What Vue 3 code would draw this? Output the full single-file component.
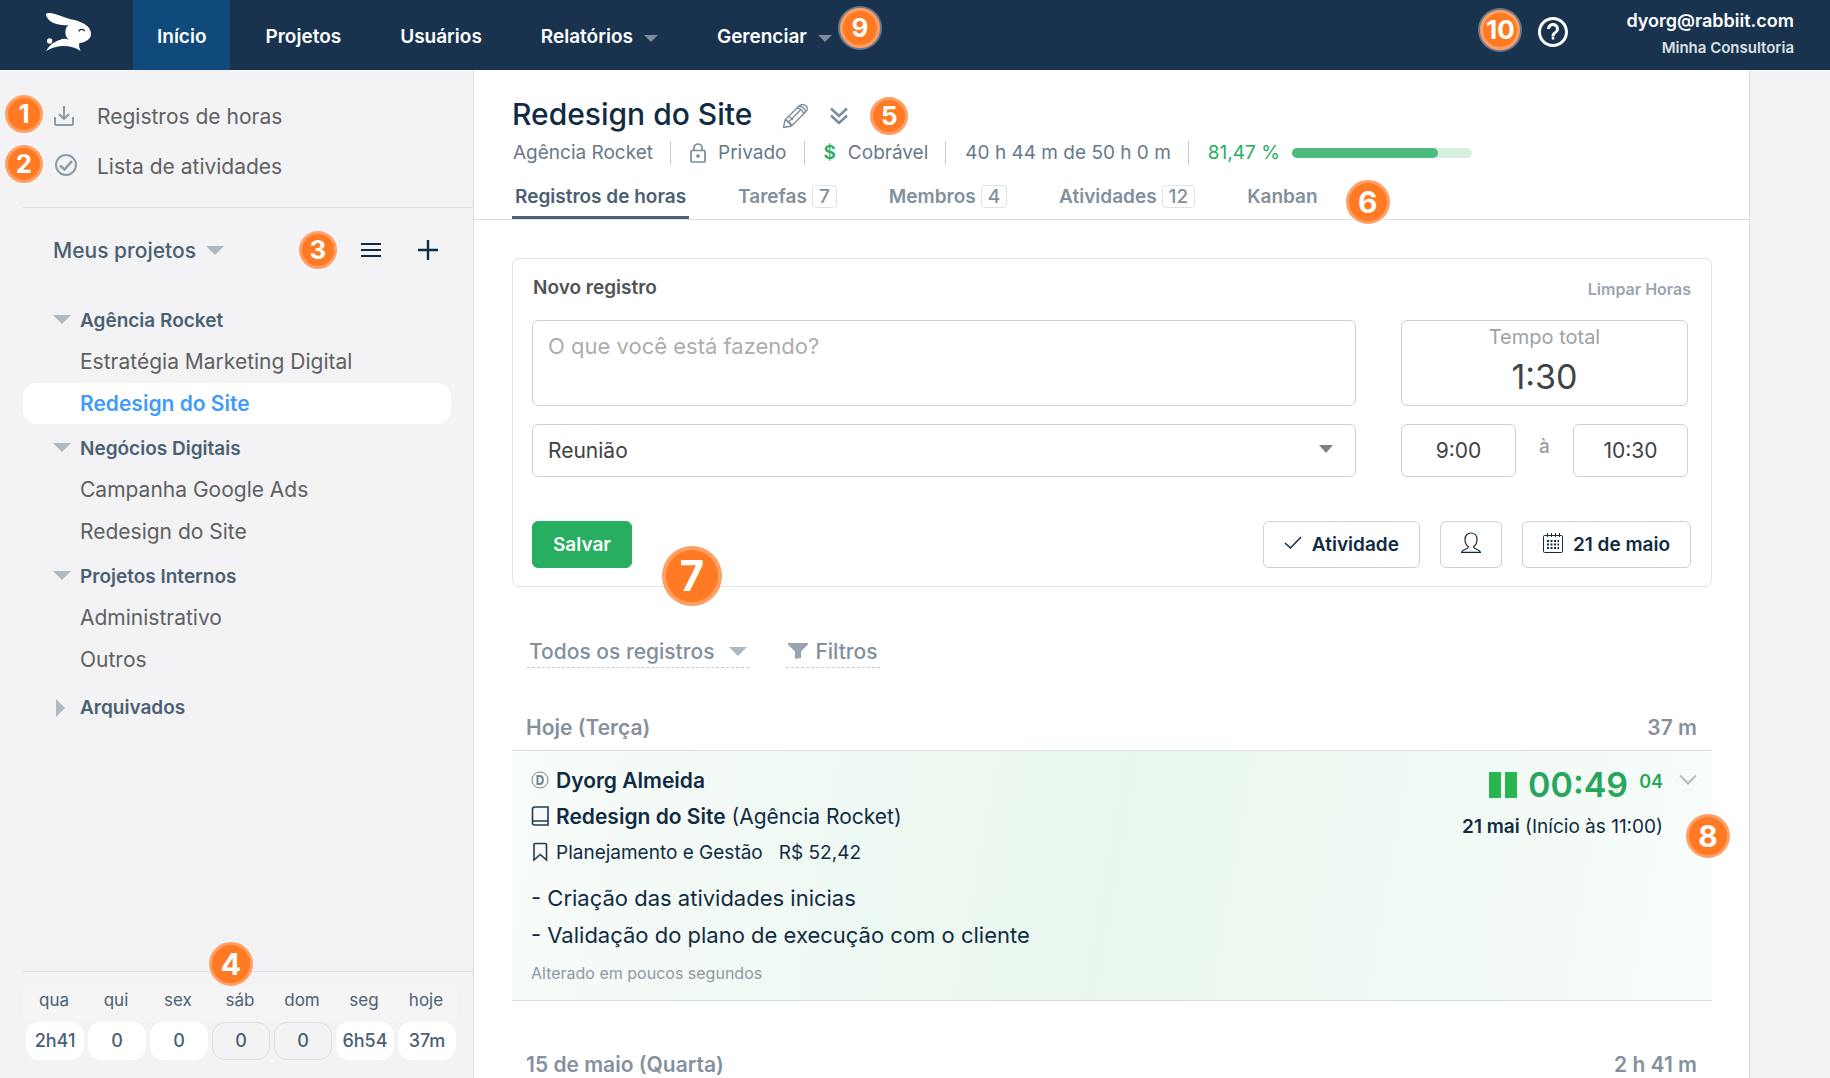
<script setup>
import { ref } from 'vue'

const menu = [
  { label: 'Início', active: true },
  { label: 'Projetos' },
  { label: 'Usuários' },
  { label: 'Relatórios', caret: true },
  { label: 'Gerenciar', caret: true, badge: 9 },
]

const groups = [
  {
    name: 'Agência Rocket',
    projects: [{ name: 'Estratégia Marketing Digital' }, { name: 'Redesign do Site', active: true }],
  },
  { name: 'Negócios Digitais', projects: [{ name: 'Campanha Google Ads' }, { name: 'Redesign do Site' }] },
  { name: 'Projetos Internos', projects: [{ name: 'Administrativo' }, { name: 'Outros' }] },
]

const days = [
  { name: 'qua', time: '2h41' },
  { name: 'qui', time: '0' },
  { name: 'sex', time: '0' },
  { name: 'sáb', time: '0', off: true },
  { name: 'dom', time: '0', off: true },
  { name: 'seg', time: '6h54' },
  { name: 'hoje', time: '37m' },
]

const tabs = [
  { label: 'Registros de horas', active: true },
  { label: 'Tarefas', count: 7 },
  { label: 'Membros', count: 4 },
  { label: 'Atividades', count: 12 },
  { label: 'Kanban', badge: 6 },
]

const progress = 81.47
const description = ref('')
const activity = ref('Reunião')
const total = ref('1:30')
const start = ref('9:00')
const end = ref('10:30')
</script>

<template>
  <div class="page">
    <header class="topbar">
      <a class="logo" href="#" aria-label="Rabbiit">
        <svg width="46" height="40" viewBox="0 0 138 120">
          <path fill="#fff" d="M3 8C2 3 8 2 17 3C34 6 52 14 74 21C104 27 138 38 138 66C138 82 121 91 103 94C101 101 103 109 107 117C78 99 40 96 3 117C14 98 30 88 44 84C54 79 62 79 72 83C60 76 56 52 70 39C42 42 9 32 3 8Z" />
          <circle cx="14" cy="87" r="8" fill="#fff" />
          <path d="M101 58C105 50 116 50 119 58" fill="none" stroke="#19334f" stroke-width="4" />
        </svg>
      </a>
      <nav class="menu">
        <a v-for="item in menu" :key="item.label" href="#" class="menu-item" :class="{ active: item.active }">
          {{ item.label }}
          <svg v-if="item.caret" class="menu-caret" width="14" height="7" viewBox="0 0 14 7"><path d="M0 0H14L7 7Z" fill="#7f8c9a" /></svg>
          <span v-if="item.badge" class="badge halo on-menu">{{ item.badge }}</span>
        </a>
      </nav>
      <div class="account">
        <span class="badge halo">10</span>
        <button class="icon-btn help" aria-label="Ajuda">
          <svg width="30" height="30" viewBox="0 0 24 24" fill="#fff"><path d="M11 18h2v-2h-2v2zm1-18C5.380 0 0 5.380 0 12s5.380 12 12 12 12-5.380 12-12S18.620 0 12 0zm0 21.600c-5.300 0-9.600-4.300-9.600-9.600S6.700 2.400 12 2.400s9.600 4.300 9.600 9.600-4.300 9.600-9.600 9.600zm0-16.800c-2.650 0-4.800 2.150-4.800 4.800h2.400c0-1.320 1.080-2.400 2.400-2.400s2.400 1.080 2.400 2.400c0 2.400-3.600 2.100-3.600 6h2.400c0-2.700 3.600-3 3.600-6 0-2.650-2.150-4.800-4.800-4.800z" /></svg>
        </button>
        <a href="#" class="user">
          <span class="user-mail">dyorg@rabbiit.com</span>
          <span class="user-org">Minha Consultoria</span>
        </a>
      </div>
    </header>

    <div class="body">
      <aside class="sidebar">
        <nav class="shortcuts">
          <a href="#" class="shortcut">
            <span class="badge on-shortcut">1</span>
            <svg width="24" height="24" viewBox="0 0 24 24" fill="none" stroke="#8a9aa8" stroke-width="2"><path d="M2 13v6.500a1.500 1.500 0 0 0 1.500 1.500h15a1.500 1.500 0 0 0 1.500-1.500V13M11 2v13M6 10l5 5 5-5" /></svg>
            Registros de horas
          </a>
          <a href="#" class="shortcut">
            <span class="badge on-shortcut">2</span>
            <svg width="24" height="24" viewBox="0 0 24 24" fill="none" stroke="#8a9aa8" stroke-width="2"><circle cx="13" cy="11" r="10" /><path d="M7 11.500l4.500 4L19 7" stroke-width="2.500" /></svg>
            Lista de atividades
          </a>
        </nav>

        <div class="projects-head">
          <button class="projects-title">
            Meus projetos
            <svg width="18" height="9" viewBox="0 0 18 9"><path d="M0 0H18L9 9Z" fill="#adb8c0" /></svg>
          </button>
          <span class="badge">3</span>
          <button class="icon-btn" aria-label="Listar projetos">
            <svg width="20" height="20" viewBox="0 0 20 20" stroke="#112b42" stroke-width="2"><path d="M0 4H20M0 10H20M0 16H20" /></svg>
          </button>
          <button class="icon-btn" aria-label="Novo projeto">
            <svg width="20" height="20" viewBox="0 0 20 20" stroke="#112b42" stroke-width="2.400"><path d="M0 10H20M10 0V20" /></svg>
          </button>
        </div>

        <ul class="tree">
          <li v-for="group in groups" :key="group.name">
            <button class="group">
              <svg width="18" height="18" viewBox="0 0 18 18"><path d="M0 3H18L9 12Z" fill="#adb8c0" /></svg>
              {{ group.name }}
            </button>
            <ul class="tree">
              <li v-for="project in group.projects" :key="project.name">
                <a href="#" class="project" :class="{ active: project.active }">{{ project.name }}</a>
              </li>
            </ul>
          </li>
          <li class="archived">
            <button class="group">
              <svg width="18" height="18" viewBox="0 0 18 18"><path d="M3 0V18L12 9Z" fill="#adb8c0" /></svg>
              Arquivados
            </button>
          </li>
        </ul>

        <div class="week">
          <span class="badge md on-week">4</span>
          <table>
            <thead>
              <tr><th v-for="day in days" :key="day.name" scope="col">{{ day.name }}</th></tr>
            </thead>
            <tbody>
              <tr>
                <td v-for="day in days" :key="day.name"><span class="day" :class="{ off: day.off }">{{ day.time }}</span></td>
              </tr>
            </tbody>
          </table>
        </div>
      </aside>

      <main class="content">
        <section class="project-head">
          <div class="title-row">
            <h1>Redesign do Site</h1>
            <button class="icon-btn" aria-label="Editar projeto">
              <svg width="26" height="26" viewBox="0 0 26 26" fill="none" stroke="#7b8d98" stroke-width="1.300" stroke-linejoin="round"><path d="M1.500 24.500L3 17L17 3C19 1 22 1 24 3S25.500 7 23.500 9L9.500 23ZM3 17C5 17 6 18 6.200 19.500C8 19.500 9.300 21 9.500 23M15 5C18 5 21.500 8.500 21.500 11M17 3C20 3 23.500 6.500 23.500 9M6.500 19L19 6.500M3.500 16.500L9.500 22.500M7 13L11 17" /></svg>
            </button>
            <button class="icon-btn" aria-label="Mais detalhes">
              <svg width="18" height="18" viewBox="0 0 18 18" fill="none" stroke="#7b8d98" stroke-width="2.500"><path d="M1 1.500L9 9L17 1.500M1 8.500L9 16L17 8.500" /></svg>
            </button>
            <span class="badge">5</span>
          </div>
          <div class="meta">
            <span>Agência Rocket</span>
            <span class="meta-icon lock">
              <svg width="16" height="20" viewBox="0 0 16 20" fill="none" stroke="#7b8d98" stroke-width="1.700"><rect x="1" y="7.500" width="14" height="11.500" rx="1" /><path d="M4 7.500V5a4 4 0 0 1 8 0V7.500" /><circle cx="8" cy="13" r="1" fill="#7b8d98" /></svg>
              Privado
            </span>
            <span class="meta-icon"><b class="money">$</b> Cobrável</span>
            <span>40 h 44 m de 50 h 0 m</span>
            <span class="percent">81,47 %</span>
            <div class="bar" role="progressbar" :aria-valuenow="progress"><div class="bar-fill" :style="{ width: progress + '%' }"></div></div>
          </div>
          <nav class="tabs">
            <a v-for="tab in tabs" :key="tab.label" href="#" class="tab" :class="{ active: tab.active }">
              {{ tab.label }}
              <span v-if="tab.count" class="count">{{ tab.count }}</span>
              <span v-if="tab.badge" class="badge md on-tab">{{ tab.badge }}</span>
            </a>
          </nav>
        </section>

        <div class="feed">
          <form class="card" @submit.prevent>
            <div class="card-head">
              <h2>Novo registro</h2>
              <button type="button" class="clear">Limpar Horas</button>
            </div>
            <div class="fields">
              <div class="fields-main">
                <textarea v-model="description" class="field" aria-label="Descrição" placeholder="O que você está fazendo?"></textarea>
                <div class="select">
                  <select v-model="activity" class="field" aria-label="Atividade"><option>Reunião</option></select>
                  <svg class="select-caret" width="14" height="8" viewBox="0 0 14 8"><path d="M0 0H14L7 8Z" fill="#808080" /></svg>
                </div>
              </div>
              <div class="fields-time">
                <label class="field total">
                  Tempo total
                  <input v-model="total" type="text" />
                </label>
                <div class="range">
                  <input v-model="start" class="field" type="text" aria-label="Início" />
                  <span>à</span>
                  <input v-model="end" class="field" type="text" aria-label="Fim" />
                </div>
              </div>
            </div>
            <div class="actions">
              <button class="btn save">Salvar</button>
              <span class="badge lg on-save">7</span>
              <button type="button" class="btn first-right">
                <svg width="18" height="18" viewBox="0 0 18 18" fill="none" stroke="#112b42" stroke-width="1.500"><path d="M1 9L6.500 14L17 3" /></svg>
                Atividade
              </button>
              <button type="button" class="btn" aria-label="Pessoa">
                <svg width="20" height="22" viewBox="0 0 20 22" fill="none" stroke="#112b42" stroke-width="1.200"><path d="M7.500 15C5 13 4 10.500 4 7.500C4 3.500 6.500 1 10 1S16 3.500 16 7.500C16 10.500 15 13 12.500 15C13 17.500 19 17 19.500 20.400H.500C1 17 7 17.500 7.500 15Z" /></svg>
              </button>
              <button type="button" class="btn">
                <svg width="20" height="22" viewBox="0 0 20 22" fill="none" stroke="#112b42"><rect x=".5" y="3.500" width="19" height="17" rx="1" /><path d="M4.500 1V5M8.500 1V5M12.500 1V5M16.500 1V5" /><path stroke-width="2" stroke-dasharray="2 1.500" d="M4 9H16M4 12.500H16M4 16H16" /></svg>
                21 de maio
              </button>
            </div>
          </form>

          <div class="filters">
            <button class="filter">
              Todos os registros
              <svg class="filter-caret" width="18" height="9" viewBox="0 0 18 9"><path d="M0 0H18L9 9Z" fill="#adb8c0" /></svg>
            </button>
            <button class="filter">
              <svg width="20" height="16" viewBox="0 0 20 16"><path d="M0 0H20V1.500L13 8.500V15L7 16V8.500L0 1.500Z" fill="#98a4b1" /></svg>
              Filtros
            </button>
          </div>

          <div class="day-head"><h3>Hoje (Terça)</h3><span>37 m</span></div>
          <article class="entry">
            <div class="entry-info">
              <p class="line">
                <svg width="18" height="18" viewBox="0 0 18 18" fill="none" stroke="#758492"><circle cx="9" cy="9" r="8" /><path d="M6.500 5V13H8.500C13 13 13 5 8.500 5Z" stroke-width="2" /></svg>
                <strong>Dyorg Almeida</strong>
              </p>
              <p class="line">
                <svg width="18" height="20" viewBox="0 0 18 20" fill="none" stroke="#233a50" stroke-width="1.600"><path d="M17 19H3.500A2 2 0 0 1 1.500 17V3A2 2 0 0 1 3.500 1H17ZM1.500 15H17" /></svg>
                <span><strong>Redesign do Site</strong> (Agência Rocket)</span>
              </p>
              <p class="line small">
                <svg width="18" height="20" viewBox="0 0 18 20" fill="none" stroke="#233a50" stroke-width="1.600"><path d="M3 18V3A1.500 1.500 0 0 1 4.500 1.500H14A1.500 1.500 0 0 1 15.500 3V18L9.200 12.500Z" /></svg>
                <span>Planejamento e Gestão</span>
                <span class="price">R$ 52,42</span>
              </p>
              <p class="note">- Criação das atividades inicias<br />- Validação do plano de execução com o cliente</p>
              <p class="changed">Alterado em poucos segundos</p>
            </div>
            <div class="entry-side">
              <div class="timer">
                <button class="icon-btn" aria-label="Pausar">
                  <svg width="28" height="26" viewBox="0 0 28 26" fill="#27b64f"><path d="M0 0H12V26H0ZM16 0H28V26H16Z" /></svg>
                </button>
                <span class="clock">00:49</span>
                <span class="seconds">04</span>
              </div>
              <p class="when"><strong>21 mai</strong> (Início às 11:00)</p>
            </div>
            <button class="icon-btn more" aria-label="Opções">
              <svg width="18" height="12" viewBox="0 0 18 12" fill="none" stroke="#b5babf" stroke-width="2"><path d="M1 1.500L9 9.500L17 1.500" /></svg>
            </button>
            <span class="badge md on-entry">8</span>
          </article>

          <div class="day-head later"><h3>15 de maio (Quarta)</h3><span>2 h 41 m</span></div>
        </div>
      </main>
      <div class="gutter"></div>
    </div>
  </div>
</template>

<style>
body {
  margin: 0;
  background: #f3f3f5;
}
</style>

<style scoped>
.page {
  display: flex;
  flex-direction: column;
  height: 100vh;
  overflow: hidden;
  font-family: Inter, "Liberation Sans", sans-serif;
  font-size: 19px;
  color: #112b42;
}
.page * {
  box-sizing: border-box;
}
h1,
h2,
h3,
p {
  margin: 0;
}
a {
  color: inherit;
  text-decoration: none;
}
button,
input,
select,
textarea {
  font: inherit;
  color: inherit;
}
button {
  border: 0;
  background: none;
  padding: 0;
  cursor: pointer;
}
svg {
  flex: none;
  display: block;
}
strong {
  font-weight: 600;
}
.icon-btn {
  display: flex;
  align-items: center;
}

/* Numbered markers */
.badge {
  display: flex;
  align-items: center;
  justify-content: center;
  flex: none;
  width: 38px;
  height: 38px;
  border: 3px solid #ff9f66;
  border-radius: 50%;
  background: #ff7a22;
  box-shadow: 0 0 0 1px rgba(255, 255, 255, 0.6);
  color: #fff;
  font-size: 26px;
  line-height: 26px;
  font-weight: 700;
}
.badge.halo {
  width: 40px;
  height: 40px;
  box-shadow: 0 0 0 2px rgba(255, 255, 255, 0.35);
}
.badge.md {
  width: 44px;
  height: 44px;
  font-size: 30px;
}
.badge.lg {
  width: 60px;
  height: 60px;
  border-width: 4px;
  font-size: 42px;
}
.on-menu,
.on-shortcut,
.on-week,
.on-tab,
.on-save,
.on-entry {
  position: absolute;
}
.on-menu {
  top: 8px;
  right: -24px;
}
.on-shortcut {
  left: 5px;
  top: 4px;
}
.on-week {
  left: 186px;
  top: -30px;
}
.on-tab {
  right: -69px;
  top: 11px;
}
.on-save {
  left: 130px;
  top: 25px;
}
.on-entry {
  right: -18px;
  top: 63px;
}

/* Top bar */
.topbar {
  display: flex;
  flex: none;
  height: 70px;
  background: #19334f;
  color: #fff;
  font-weight: 600;
}
.logo {
  width: 133px;
  padding: 12px 0 0 45px;
}
.menu {
  display: flex;
  gap: 11px;
}
.menu-item {
  position: relative;
  display: flex;
  align-items: center;
  padding: 2px 24px 0;
}
.menu-item.active {
  background: #0f4a7a;
}
.menu-caret {
  margin: 4px 0 0 11px;
}
.account {
  display: flex;
  align-items: center;
  margin-left: auto;
  padding: 0 36px 2px 0;
}
.account .badge {
  margin-bottom: 8px;
}
.help {
  margin: 0 58px 4px 18px;
}
.user {
  display: flex;
  flex-direction: column;
  text-align: right;
}
.user-mail {
  font-size: 18px;
  line-height: 28px;
}
.user-org {
  font-size: 15px;
  line-height: 26px;
  color: #dbe0e5;
}

.body {
  display: flex;
  flex: 1;
  min-height: 0;
}

/* Sidebar */
.sidebar {
  display: flex;
  flex-direction: column;
  flex: none;
  width: 474px;
  border-right: 1px solid #dcdde0;
  background: #f3f3f5;
}
.shortcuts {
  margin-left: 23px;
  padding: 21px 0 16px;
  border-bottom: 1px solid #dcdde0;
}
.shortcut {
  position: relative;
  display: flex;
  align-items: center;
  gap: 20px;
  height: 50px;
  margin-left: -23px;
  padding-left: 53px;
  font-size: 21px;
  color: #5f6062;
}
.projects-head {
  display: flex;
  align-items: center;
  padding: 23px 35px 28px 53px;
}
.projects-head .icon-btn {
  margin-left: 37px;
}
.projects-head .badge + .icon-btn {
  margin-left: 24px;
}
.projects-title {
  display: flex;
  align-items: center;
  gap: 10px;
  margin-right: auto;
  font-size: 21px;
  font-weight: 500;
  color: #4b6072;
}
.tree {
  margin: 0;
  padding: 0;
  list-style: none;
}
.group {
  display: flex;
  align-items: center;
  gap: 9px;
  height: 44px;
  padding: 3px 0 0 53px;
  font-weight: 600;
  color: #4b6072;
}
.project {
  display: flex;
  align-items: center;
  height: 41px;
  margin: 0 22px 1px 23px;
  padding-left: 57px;
  border-radius: 14px;
  font-size: 21px;
  color: #5f6062;
}
.project.active {
  background: #fff;
  color: #3f9cfb;
  font-weight: 600;
}
.archived {
  margin-top: 4px;
}
.week {
  position: relative;
  margin: auto 0 0 23px;
  padding: 15px 16px 18px 0;
  border-top: 1px solid #dcdde0;
}
table {
  width: 100%;
  table-layout: fixed;
  border-collapse: collapse;
}
thead {
  background: #f5f5f5;
}
th {
  height: 35px;
  padding: 0 0 10px;
  font-size: 17px;
  font-weight: 400;
  color: #4b6072;
}
td {
  padding: 0 1px 0 3px;
}
.day {
  display: block;
  border: 1px solid #fff;
  border-radius: 13px;
  background: #fff;
  font-size: 18px;
  font-weight: 500;
  line-height: 36px;
  text-align: center;
  color: #4b6072;
}
.day.off {
  background: none;
  border-color: #dcdde0;
}

/* Content */
.content {
  flex: 1;
  min-width: 0;
  background: #fff;
  overflow: hidden;
}
.gutter {
  width: 81px;
  border-left: 1px solid #dcdde0;
}
.project-head {
  padding: 25px 38px 0;
  border-bottom: 1px solid #dcdde0;
}
.title-row {
  display: flex;
  align-items: center;
  gap: 22px;
  height: 42px;
}
h1 {
  margin-right: 8px;
  padding-bottom: 4px;
  font-size: 30px;
  font-weight: 500;
}
.meta {
  display: flex;
  align-items: center;
  height: 32px;
  color: #68798a;
}
.meta > span {
  padding: 0 17px 0 19px;
  line-height: 24px;
}
.meta > span:first-child {
  padding-left: 1px;
}
.meta > span + span {
  border-left: 1px solid #c8cdd2;
}
.meta-icon {
  display: flex;
  align-items: center;
  gap: 12px;
}
.money {
  color: #27ae60;
  font-weight: 600;
}
.meta > .percent {
  padding-right: 12px;
  color: #27ae60;
}
.bar {
  width: 180px;
  height: 10px;
  border-radius: 5px;
  background: #d5f0e0;
}
.bar-fill {
  height: 100%;
  border-radius: 5px;
  background: #4cbb7b;
}
.tabs {
  display: flex;
  gap: 46px;
}
.tab {
  position: relative;
  display: flex;
  align-items: center;
  gap: 5px;
  height: 50px;
  padding: 8px 3px 0;
  border-bottom: 3px solid transparent;
  font-weight: 600;
  color: #81909d;
}
.tab.active {
  border-color: #4b6072;
  color: #4b6072;
}
.count {
  padding: 0 6px;
  border: 1px solid #e0e3e6;
  border-radius: 4px;
  font-weight: 500;
  line-height: 21px;
}
.feed {
  padding: 38px 37px 0 38px;
}
.card {
  padding: 14px 20px 18px 19px;
  border: 1px solid #e0e2e4;
  border-radius: 7px;
}
.card-head {
  display: flex;
  align-items: center;
  justify-content: space-between;
  height: 28px;
  margin-bottom: 19px;
}
h2 {
  padding-left: 1px;
  font-size: 19px;
  font-weight: 600;
  color: #505356;
}
.clear {
  padding-top: 3px;
  font-size: 16px;
  font-weight: 600;
  color: #9aa5b1;
}
.field {
  display: block;
  width: 100%;
  height: 53px;
  padding: 0 15px;
  border: 1px solid #cbd0d5;
  border-radius: 6px;
  background: #fff;
  font-size: 21px;
  color: #404244;
}
.fields {
  display: flex;
  gap: 45px;
  padding-right: 3px;
}
.fields-main {
  flex: 1;
}
.fields-time {
  width: 287px;
}
textarea.field {
  height: 86px;
  margin-bottom: 18px;
  padding-top: 12px;
  font-size: 22px;
  resize: none;
}
textarea::placeholder {
  color: #adadad;
}
.select {
  position: relative;
}
select.field {
  appearance: none;
}
.select-caret {
  position: absolute;
  right: 23px;
  top: 21px;
}
.field.total {
  height: 86px;
  margin-bottom: 18px;
  padding-top: 4px;
  font-size: 20px;
  line-height: 24px;
  text-align: center;
  color: #a0a2a4;
}
.total input {
  display: block;
  width: 100%;
  height: 46px;
  padding: 8px 0 0;
  border: 0;
  background: none;
  text-align: center;
  font-size: 34px;
  color: #404244;
}
.range {
  display: flex;
  align-items: center;
  justify-content: space-between;
}
.range .field {
  width: 115px;
  text-align: center;
}
.range span {
  padding-bottom: 8px;
  font-weight: 500;
  color: #9a9c9e;
}
.actions {
  position: relative;
  display: flex;
  gap: 20px;
  margin-top: 44px;
}
.btn {
  display: flex;
  align-items: center;
  gap: 10px;
  height: 47px;
  padding: 0 20px;
  border: 1px solid #cbd0d5;
  border-radius: 6px;
  background: #fff;
  font-weight: 600;
}
.btn svg {
  margin-bottom: 4px;
}
.first-right {
  margin-left: auto;
}
.save {
  border-color: #27ae60;
  background: #27ae60;
  color: #fff;
}
.filters {
  display: flex;
  gap: 37px;
  padding: 48px 15px 0;
}
.filter {
  display: flex;
  align-items: center;
  gap: 7px;
  height: 33px;
  padding: 0 2px;
  border-bottom: 1px dashed #c5cad0;
  font-size: 21px;
  font-weight: 500;
  color: #81909d;
}
.filter-caret {
  margin-left: 8px;
}
.day-head {
  display: flex;
  align-items: center;
  justify-content: space-between;
  height: 47px;
  margin-top: 36px;
  padding: 0 15px 0 14px;
  border-bottom: 1px solid #dcdfe0;
  font-weight: 600;
  font-size: 21px;
  color: #87919e;
}
h3 {
  font-size: 21px;
  font-weight: 600;
}
.entry {
  position: relative;
  display: flex;
  padding: 11px 15px 8px 19px;
  border-bottom: 1px solid #dcdfe0;
  background: linear-gradient(100deg, #f8fcfa, #e8f6ed 50%, #f9fdfb);
}
.entry-info {
  flex: 1;
}
.line {
  display: flex;
  align-items: center;
  gap: 7px;
  height: 36px;
  font-size: 21px;
}
.line.small {
  font-size: 19px;
}
.price {
  margin-left: 9px;
}
.note {
  padding-top: 10px;
  font-size: 22px;
  line-height: 37px;
}
.changed {
  font-size: 16px;
  line-height: 38px;
  color: #8d99a4;
}
.entry-side {
  padding-top: 4px;
}
.timer {
  display: flex;
  justify-content: flex-end;
  height: 38px;
  color: #27a75c;
  font-weight: 600;
}
.timer .icon-btn {
  align-self: center;
}
.clock {
  margin: 0 11px;
  font-size: 34px;
  line-height: 38px;
}
.seconds {
  font-size: 18px;
  line-height: 32px;
}
.when {
  padding-top: 3px;
  line-height: 40px;
  text-align: right;
}
.more {
  align-self: flex-start;
  margin: 12px 0 0 16px;
}
.later {
  margin-top: 40px;
}
</style>
